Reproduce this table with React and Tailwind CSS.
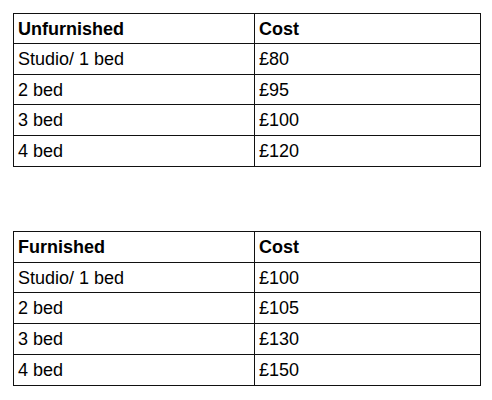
export default function App() {
  const t1 = [
    ["Studio/ 1 bed", "£80"],
    ["2 bed", "£95"],
    ["3 bed", "£100"],
    ["4 bed", "£120"],
  ];
  const t2 = [
    ["Studio/ 1 bed", "£100"],
    ["2 bed", "£105"],
    ["3 bed", "£130"],
    ["4 bed", "£150"],
  ];
  const Table = ({ head, rows, heights }) => (
    <div className="w-[468px] border border-[#111] flex flex-col">
      <div className={`flex border-b border-[#111] ${heights[0]}`}>
        <div className="w-[241px] border-r border-[#111] pl-[4px] flex items-center font-bold">{head}</div>
        <div className="flex-1 pl-[4px] flex items-center font-bold">Cost</div>
      </div>
      {rows.map((r, i) => (
        <div key={i} className={`flex ${i < rows.length - 1 ? "border-b border-[#111]" : ""} ${heights[i + 1]}`}>
          <div className="w-[241px] border-r border-[#111] pl-[4px] flex items-center">{r[0]}</div>
          <div className="flex-1 pl-[4px] flex items-center">{r[1]}</div>
        </div>
      ))}
    </div>
  );
  return (
    <div className="w-[492px] h-[400px] bg-white text-black text-[18px] leading-none pl-[13px] pt-[13px] flex flex-col gap-[64px]" style={{ fontFamily: '"Liberation Sans", Arial, sans-serif' }}>
      <Table head="Unfurnished" rows={t1} heights={["h-[30px]", "h-[31px]", "h-[30px]", "h-[31px]", "h-[30px]"]} />
      <Table head="Furnished" rows={t2} heights={["h-[31px]", "h-[30px]", "h-[31px]", "h-[31px]", "h-[30px]"]} />
    </div>
  );
}
